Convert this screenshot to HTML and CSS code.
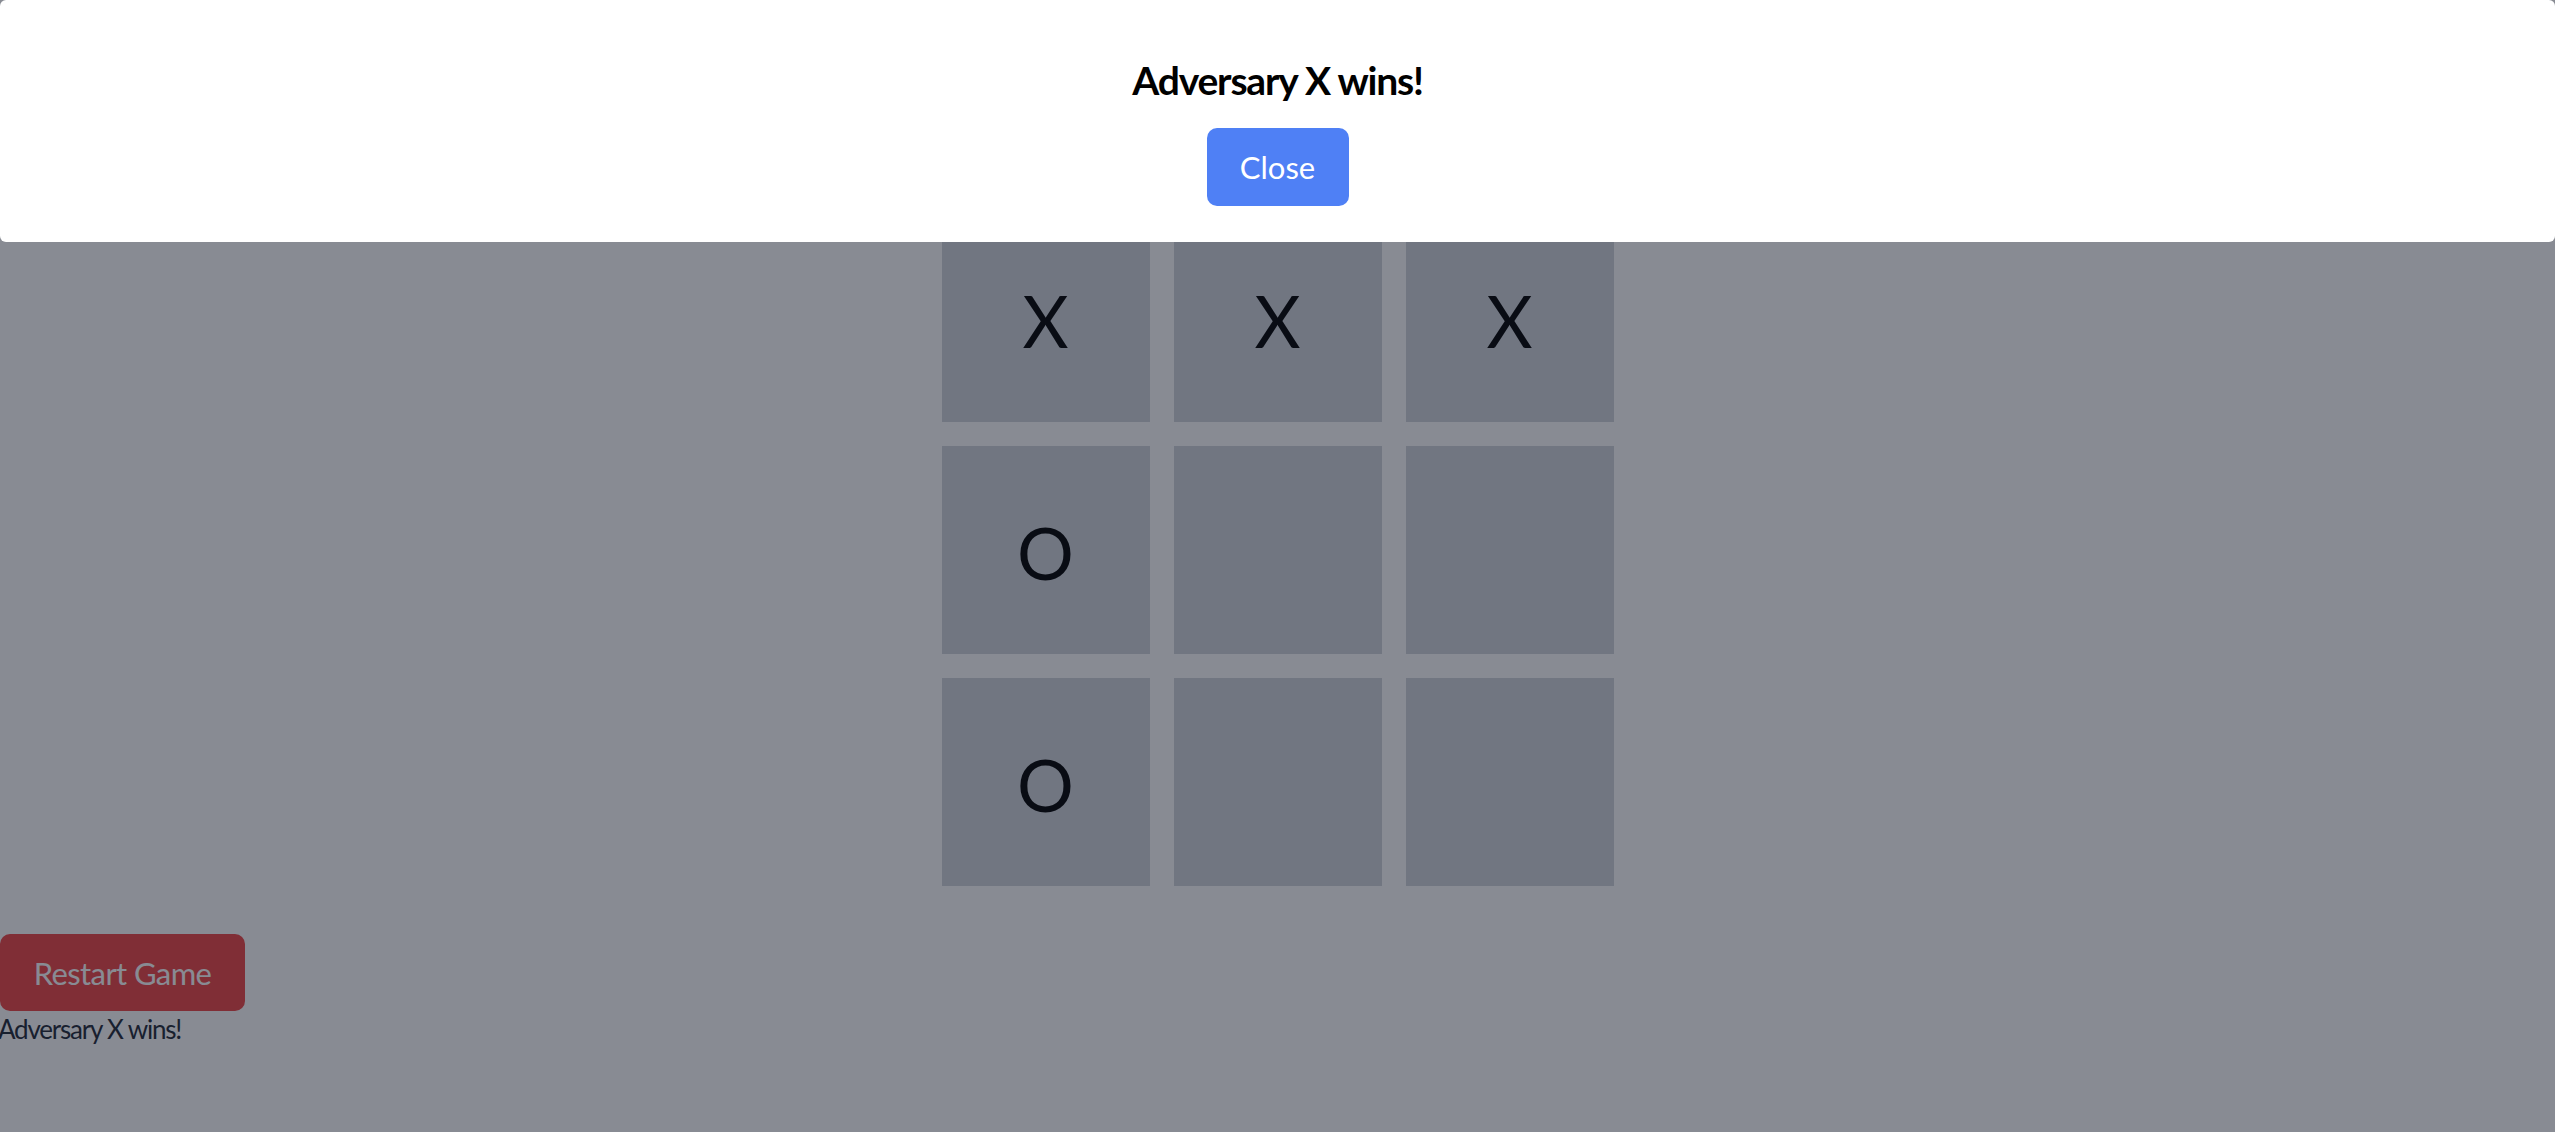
FILE: index.html
```html
<!DOCTYPE html>
<html lang="en">
<head>
<meta charset="utf-8">
<title>Tic Tac Toe</title>
<link rel="stylesheet" href="styles.css">
</head>
<body>
<main class="game">
  <div class="board">
    <div class="cell">X</div>
    <div class="cell">X</div>
    <div class="cell">X</div>
    <div class="cell">O</div>
    <div class="cell"></div>
    <div class="cell"></div>
    <div class="cell">O</div>
    <div class="cell"></div>
    <div class="cell"></div>
  </div>
  <button class="restart">Restart Game</button>
  <p class="status">Adversary X wins!</p>
</main>
<div class="overlay"></div>
<div class="modal">
  <h2 class="modal-title">Adversary X wins!</h2>
  <button class="close">Close</button>
</div>
</body>
</html>
```
FILE: styles.css
```css
html, body {
  margin: 0;
  padding: 0;
  background: #ffffff;
  font-family: "Lato", "Open Sans", sans-serif;
  color: #000;
}

.game {
  display: flex;
  flex-direction: column;
  padding-top: 214px;
}

.board {
  display: grid;
  grid-template-columns: repeat(3, 208px);
  grid-auto-rows: 208px;
  gap: 24px;
  justify-content: center;
}

.cell {
  background: #d1d5db;
  display: flex;
  align-items: center;
  justify-content: center;
  font-size: 71px;
  padding-top: 4px;
  box-sizing: border-box;
  color: #000;
}

.restart {
  align-self: flex-start;
  margin-top: 48px;
  width: 245px;
  height: 77px;
  border: 0;
  border-radius: 10px;
  background: #ef4444;
  color: #fff;
  font-family: inherit;
  font-size: 31px;
  letter-spacing: -0.6px;
  padding: 0;
}

.status {
  margin: 0 0 0 -2px;
  font-size: 26px;
  line-height: 36px;
  letter-spacing: -1.2px;
  color: #1f2937;
}

.overlay {
  position: fixed;
  inset: 0;
  background: rgba(17, 24, 39, 0.5);
}

.modal {
  position: fixed;
  top: 0;
  left: 0;
  right: 0;
  height: 242px;
  box-sizing: border-box;
  padding-top: 57px;
  background: #fff;
  border-radius: 6px;
  display: flex;
  flex-direction: column;
  align-items: center;
}

.modal-title {
  margin: 0 0 24px;
  font-size: 39px;
  line-height: 47px;
  font-weight: 700;
  letter-spacing: -1.2px;
  color: #000;
}

.close {
  width: 142px;
  height: 78px;
  border: 0;
  border-radius: 10px;
  background: #4f80f5;
  color: #fff;
  font-family: inherit;
  font-size: 31px;
  padding: 0;
}
```
